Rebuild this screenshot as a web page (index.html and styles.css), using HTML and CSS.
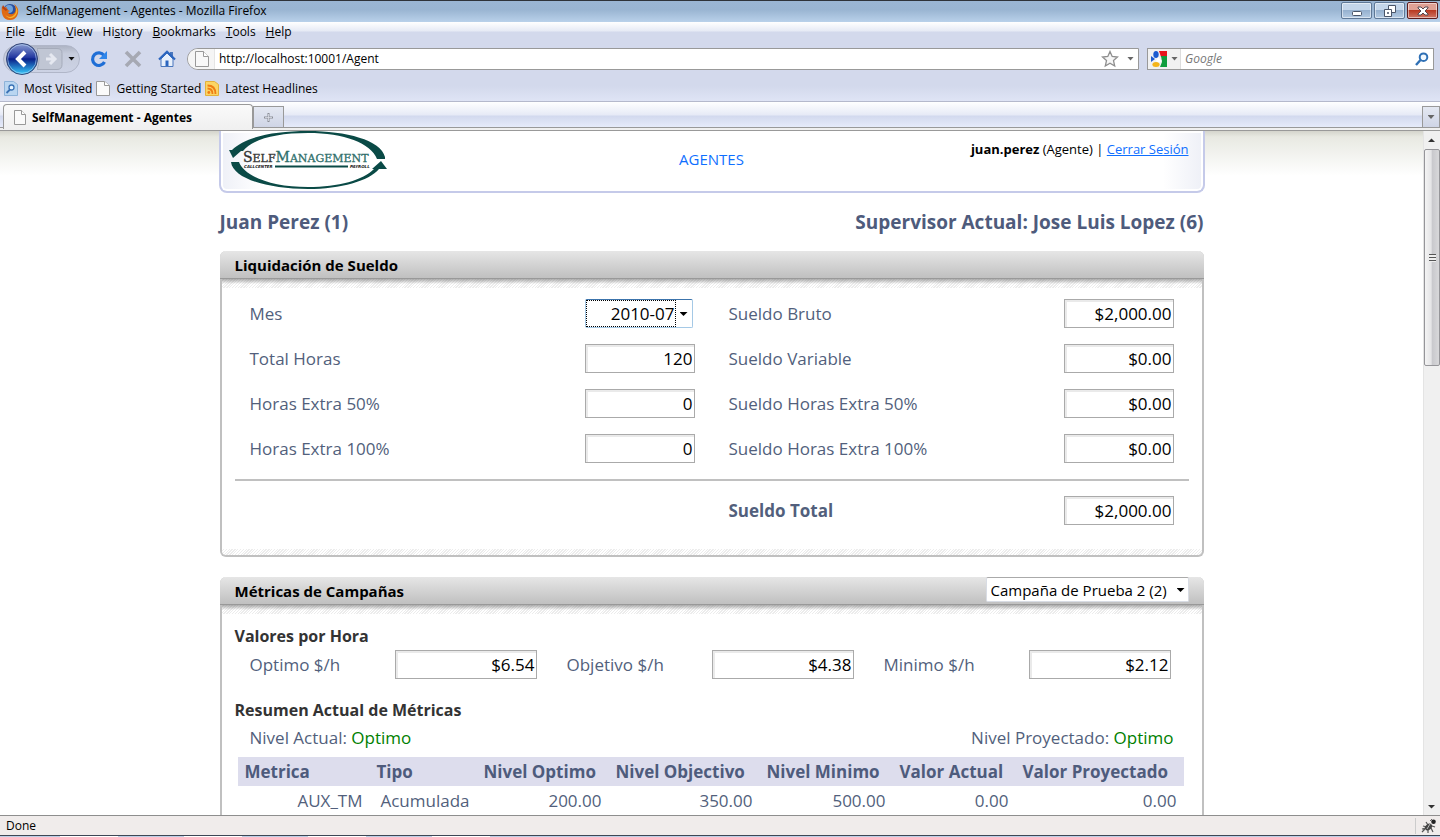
FILE: index.html
```html
<!DOCTYPE html>
<html lang="es">
<head>
<meta charset="utf-8">
<title>SelfManagement - Agentes</title>
<link rel="stylesheet" href="styles.css">
</head>
<body>
<div class="window">
  <header class="titlebar">
    <svg class="fox" width="18" height="18" viewBox="0 0 18 18" aria-hidden="true">
      <circle cx="9" cy="8" r="7" fill="#2b4f9e"/>
      <circle cx="8" cy="6" r="4" fill="#6fa3dc"/>
      <path d="M1 3C0 9 1 17 9 17C15 17 18 12 17 6C16 4 15 2 13 1C15 4 15 6 14 9C12 12 8 12 7 9L9 8L5 6L6 4C4 4 3 5 2 5Z" fill="#df6a12"/>
      <path d="M3 9C4 14 10 16 14 11C16 8 15 5 14 3C16 5 17 8 16 10C14 16 6 18 3 9Z" fill="#f7b52c"/>
      <path d="M1 5L2 2L4 5L7 6L5 8Z" fill="#b9400f"/>
    </svg>
    <span class="titlebar-text">SelfManagement - Agentes - Mozilla Firefox</span>
    <div class="win-buttons">
      <button class="win-btn" aria-label="Minimize"><svg width="12" height="12" viewBox="0 0 12 12"><rect x="1.500" y="6.500" width="9" height="4" rx="1" fill="#fff" stroke="#4a5568"/></svg></button>
      <button class="win-btn" aria-label="Restore"><svg width="12" height="12" viewBox="0 0 12 12"><path d="M4.500.5h7v7h-7z" fill="#fff" stroke="#4a5568"/><path d="M.5 4.500h7v7h-7z" fill="#fff" stroke="#4a5568"/><path d="M3.500 7.500h1v1h-1z" fill="#8fa6c2" stroke="#4a5568"/></svg></button>
      <button class="win-btn win-close" aria-label="Close"><svg width="12" height="12" viewBox="0 0 12 12"><path d="M1 2h3l2 2 2-2h3v1L8 6l3 3v1H8L6 8l-2 2H1V9l3-3-3-3z" fill="#fff" stroke="#55474e"/></svg></button>
    </div>
  </header>

  <div class="chrome">
    <nav class="menubar">
      <button><u>F</u>ile</button><button><u>E</u>dit</button><button><u>V</u>iew</button><button>Hi<u>s</u>tory</button><button><u>B</u>ookmarks</button><button><u>T</u>ools</button><button><u>H</u>elp</button>
    </nav>
    <div class="navbar">
      <div class="history-pill">
        <button class="icon-btn" aria-label="Back"><svg width="34" height="34" viewBox="0 0 34 34">
          <defs><linearGradient id="back" x1="0" y1="0" x2="0" y2="1"><stop offset="0" stop-color="#8d9ed2"/><stop offset=".45" stop-color="#2338a0"/><stop offset=".5" stop-color="#0a1f88"/><stop offset="1" stop-color="#38d0ff"/></linearGradient></defs>
          <circle cx="17" cy="17" r="15.500" fill="url(#back)" stroke="#344675"/><circle cx="17" cy="17" r="14.300" fill="none" stroke="#b7d6f4" stroke-opacity=".6"/>
          <path d="M20 10L13 17l7 7" fill="none" stroke="#fff" stroke-width="4"/></svg></button>
        <button class="icon-btn fwd" aria-label="Forward"><svg width="26" height="24" viewBox="0 0 26 24"><path d="M0 1.500h20q5 0 5 5v11q0 5-5 5H0q4-10 0-21z" fill="#c0c6d4" stroke="#a5abba"/><path d="M9 12h8M13 7l5 5-5 5" fill="none" stroke="#e5e8f0" stroke-width="3"/></svg></button>
        <button class="icon-btn arrow dark" aria-label="Recent pages"></button>
      </div>
      <button class="icon-btn reload" aria-label="Reload"><svg width="18" height="18" viewBox="0 0 18 18"><path d="M14 5.500A6.300 6.300 0 1 0 14.500 12" fill="none" stroke="#1f6fd6" stroke-width="3.200"/><path d="M17 1v8H9z" fill="#2f86ea"/></svg></button>
      <button class="icon-btn stop" aria-label="Stop"><svg width="18" height="18" viewBox="0 0 18 18"><path d="M2 2l14 14M16 2L2 16" stroke="#a6a9b3" stroke-width="3.600"/></svg></button>
      <button class="icon-btn" aria-label="Home"><svg width="18" height="18" viewBox="0 0 18 18"><path d="M3 9v7.500h12V9L9 3z" fill="#e8f0fb" stroke="#4a77bd"/><path d="M12 2h3v5h-3z" fill="#4a77bd"/><path d="M1 9.500L9 1.800l8 7.700" fill="none" stroke="#2c66bf" stroke-width="2.200"/><path d="M7.500 10.500h3V16h-3z" fill="#2c66bf"/></svg></button>
      <div class="urlbar">
        <span class="url-icon"><svg width="14" height="16" viewBox="0 0 14 16"><path d="M.5.500h8l5 5v10H.5z" fill="#f8f8f8" stroke="#999"/><path d="M8.500.5v5h5" fill="#fff" stroke="#999"/></svg></span>
        <input class="url-input" aria-label="Location" value="http://localhost:10001/Agent">
        <button class="icon-btn" aria-label="Bookmark this page"><svg width="18" height="18" viewBox="0 0 18 18"><path d="M9 1.500l2.200 5 5.300.5-4 3.600 1.200 5.400L9 13.200 4.300 16l1.200-5.400-4-3.600 5.300-.5z" fill="#f6f6f6" stroke="#8e8e8e" stroke-width="1.300"/></svg></button>
        <button class="icon-btn arrow" aria-label="Show history"></button>
      </div>
      <div class="search">
        <button class="engine" aria-label="Search engine"><svg width="16" height="16" viewBox="0 0 16 16"><path d="M8 0h8v6h-6z" fill="#e8141b"/><path d="M10 5h6v11H9l2-5z" fill="#0f9d3d"/><path d="M0 5l4 3-4 3z" fill="#1c5bd0"/><ellipse cx="5" cy="3.500" rx="2.700" ry="3.500" fill="#1c5bd0"/><path d="M7 6l4 4-4 2-2-2z" fill="#fff"/><ellipse cx="5" cy="13.500" rx="3.600" ry="2.500" fill="#f4b41a"/></svg><i class="arrow"></i></button>
        <input class="search-input" aria-label="Search" placeholder="Google">
        <button class="icon-btn" aria-label="Search"><svg width="14" height="14" viewBox="0 0 14 14"><circle cx="8.500" cy="5.200" r="3.800" fill="#f2f9ff" stroke="#2f70b5" stroke-width="2"/><path d="M5.500 8L1 13" stroke="#2f70b5" stroke-width="2.400"/></svg></button>
      </div>
    </div>
    <nav class="bookmarks">
      <a href="#"><svg width="14" height="15" viewBox="0 0 14 15"><path d="M.5.500h9l4 3v11H.5z" fill="#b9d5f1" stroke="#8db2d8"/><circle cx="7.500" cy="6.500" r="2.500" fill="#eaf5ff" stroke="#3b72b5" stroke-width="1.300"/><path d="M6 8.500L2.500 12" stroke="#3b72b5" stroke-width="1.800"/></svg>Most Visited</a>
      <a href="#"><svg width="14" height="15" viewBox="0 0 14 15"><path d="M.5.500h8l5 4v10H.5z" fill="#fafafa" stroke="#999"/><path d="M8.500.5v4h5" fill="#fff" stroke="#999"/></svg>Getting Started</a>
      <a href="#"><svg width="14" height="15" viewBox="0 0 14 15"><path d="M.5.500h9l4 3v11H.5z" fill="#fbd565" stroke="#e3b13c"/><circle cx="3.800" cy="11.500" r="1.400" fill="#ef7d14"/><path d="M2.500 7.500q5 0 5 5.500M2.500 4.500q8 0 8 8.500" fill="none" stroke="#ef7d14" stroke-width="1.800"/></svg>Latest Headlines</a>
    </nav>
  </div>

  <div class="tabstrip">
    <button class="tab"><svg width="12" height="15" viewBox="0 0 12 15"><path d="M.5.500h7l4 4v10H.5z" fill="#fafafa" stroke="#999"/><path d="M7.500.5v4h4" fill="#fff" stroke="#999"/></svg>SelfManagement - Agentes</button>
    <button class="tab-new" aria-label="New tab"><svg width="9" height="9" viewBox="0 0 9 9"><path d="M4.500 0v9M0 4.500h9" stroke="#8a8d96" stroke-width="2"/><path d="M4.500 1v7M1 4.500h7" stroke="#dde0e8" stroke-width=".8"/></svg></button>
    <button class="tab-list" aria-label="List all tabs"><i class="arrow"></i></button>
  </div>

  <div class="viewport">
    <main class="page">
      <div class="column">
        <div class="site-header">
          <svg class="logo" width="158" height="58" viewBox="0 0 158 58" role="img" aria-label="SelfManagement Callcenter Payroll">
            <path d="M3 19C16 6 44 0 79 0C117 0 152 9 156 26L156 28L148 28C142 12 115 2 79 2C47 2 24 8 14 20L12 20L4 27L0 19Z" fill="#0a4a46"/>
            <path d="M2 31C4 48 40 58 79 58C112 58 140 50 150 38L158 38L152 30L143 38L145 38C134 49 110 56 79 56C42 56 15 45 10 31Z" fill="#0a4a46"/>
            <text x="14" y="31" class="logo-name"><tspan class="logo-dark"><tspan class="logo-cap">S</tspan>ELF</tspan><tspan class="logo-teal"><tspan class="logo-cap">M</tspan>ANAGEMENT</tspan></text>
            <text x="15" y="37" class="logo-tag">CALLCENTER</text>
            <path d="M46 35.500h73" stroke="#0a4a46" stroke-width="2"/>
            <text x="121" y="37" class="logo-tag">PAYROLL</text>
          </svg>
          <a class="section-link" href="#">AGENTES</a>
          <p class="user"><b>juan.perez</b> (Agente) | <a href="#">Cerrar Sesión</a></p>
        </div>

        <div class="headline"><h1>Juan Perez (1)</h1><h1>Supervisor Actual: Jose Luis Lopez (6)</h1></div>

        <section class="panel">
          <div class="panel-head"><h2>Liquidación de Sueldo</h2></div>
          <div class="panel-body salary">
            <div class="pair">
              <div class="field"><label for="mes">Mes</label><span class="month"><select id="mes"><option>2010-07</option></select></span></div>
              <div class="field"><label for="bruto">Sueldo Bruto</label><input id="bruto" value="$2,000.00"></div>
              <div class="field"><label for="horas">Total Horas</label><input id="horas" value="120"></div>
              <div class="field"><label for="variable">Sueldo Variable</label><input id="variable" value="$0.00"></div>
              <div class="field"><label for="h50">Horas Extra 50%</label><input id="h50" value="0"></div>
              <div class="field"><label for="s50">Sueldo Horas Extra 50%</label><input id="s50" value="$0.00"></div>
              <div class="field"><label for="h100">Horas Extra 100%</label><input id="h100" value="0"></div>
              <div class="field"><label for="s100">Sueldo Horas Extra 100%</label><input id="s100" value="$0.00"></div>
            </div>
            <div class="pair total">
              <div class="field last"><label for="total"><b>Sueldo Total</b></label><input id="total" value="$2,000.00"></div>
            </div>
          </div>
        </section>

        <section class="panel">
          <div class="panel-head"><h2>Métricas de Campañas</h2><span class="campaign"><select aria-label="Campaña"><option>Campaña de Prueba 2 (2)</option></select></span></div>
          <div class="panel-body metrics">
            <h3>Valores por Hora</h3>
            <div class="rates">
              <div class="field"><label for="opt">Optimo $/h</label><input id="opt" value="$6.54"></div>
              <div class="field"><label for="obj">Objetivo $/h</label><input id="obj" value="$4.38"></div>
              <div class="field"><label for="min">Minimo $/h</label><input id="min" value="$2.12"></div>
            </div>
            <h3>Resumen Actual de Métricas</h3>
            <div class="levels"><p>Nivel Actual: <span>Optimo</span></p><p>Nivel Proyectado: <span>Optimo</span></p></div>
            <table>
              <colgroup><col class="c-metric"><col class="c-type"><col class="c-opt"><col class="c-obj"><col class="c-min"><col class="c-now"><col class="c-proj"></colgroup>
              <thead><tr><th>Metrica</th><th>Tipo</th><th>Nivel Optimo</th><th>Nivel Objectivo</th><th>Nivel Minimo</th><th>Valor Actual</th><th>Valor Proyectado</th></tr></thead>
              <tbody><tr><td>AUX_TM</td><td>Acumulada</td><td>200.00</td><td>350.00</td><td>500.00</td><td>0.00</td><td>0.00</td></tr></tbody>
            </table>
          </div>
        </section>
      </div>
    </main>
    <div class="scrollbar" aria-hidden="true">
      <svg width="16" height="18" viewBox="0 0 16 18"><path d="M4 11L7.500 7.500 11 11z" fill="#333"/></svg>
      <div class="thumb"><i></i></div>
      <svg class="down" width="16" height="18" viewBox="0 0 16 18"><path d="M4 8h7L7.500 11.500z" fill="#333"/></svg>
    </div>
  </div>

  <footer class="status">
    <span>Done</span>
    <span class="bug"><svg width="16" height="16" viewBox="0 0 16 16"><path d="M1 14l3-3M2 8l4 1M5 4l2 3M7 15l0-4M12 14l-2-4M14 9l-3-1M1 11l4-1" stroke="#555" stroke-width="1.200"/><ellipse cx="7.500" cy="9" rx="4" ry="2.800" transform="rotate(-40 7.500 9)" fill="#444"/><path d="M6 11l3-5" stroke="#bbb"/><circle cx="12.500" cy="3.800" r="2.300" fill="#222"/><path d="M9 3l2-2" stroke="#666"/></svg></span>
  </footer>
  <div class="taskbar"><i></i><i></i><i></i><i></i></div>
</div>
</body>
</html>
```

FILE: styles.css
```css
* { box-sizing: border-box; }
body { margin: 0; font-family: "Open Sans", "Noto Sans", sans-serif; font-size: 12px; color: #000; background: #fff; }
h1, h2, h3, p { margin: 0; }
button, input, select { font: inherit; color: inherit; margin: 0; }
button { border: 0; background: none; padding: 0; }
svg { display: block; flex: none; }

.window { height: 100vh; display: flex; flex-direction: column; overflow: hidden; }

/* Browser chrome */
.titlebar { flex: none; height: 22px; display: flex; align-items: center; border-top: 1px solid #2e3238; background: linear-gradient(#9ab5d3, #99b4d1 40%, #b9d1ea); padding-left: 1px; }
.titlebar-text { flex: 1; padding-left: 7px; line-height: 18px; padding-bottom: 2px; }
.win-buttons { display: flex; gap: 2px; padding: 0 2px 2px 0; }
.win-btn { width: 31px; height: 17px; display: flex; align-items: center; justify-content: center; border: 1px solid #5f7896; border-radius: 2px; background: linear-gradient(#c4d6ea 45%, #96b1cf 50%, #b4cbe3); box-shadow: inset 0 0 0 1px rgba(255,255,255,.5); }
.win-close { border-color: #5e1c1c; background: linear-gradient(#e0a195 45%, #b93a22 50%, #cf7766); }

.chrome { flex: none; background: linear-gradient(#fff, #e6eaf5 9px, #d3d9ec 10px, #d3d9ec 64px, #dfe4f5); border-bottom: 1px solid #b5b9cc; }
.menubar { height: 20px; display: flex; gap: 10px; align-items: center; padding-left: 6px; line-height: 18px; }
.navbar { height: 33px; display: flex; align-items: center; padding: 0 6px 0 3px; }
.icon-btn { display: flex; align-items: center; justify-content: center; flex: none; }
.history-pill { display: flex; align-items: center; width: 77px; height: 28px; border-radius: 14px; background: linear-gradient(#aeb4c4, #c6ccdc 30%, #ccd2e4); border: 1px solid #b0b6c8; padding-left: 1px; }
.fwd { margin-left: -2px; }
.arrow { width: 7px; height: 4px; background: #666; clip-path: polygon(0 0, 100% 0, 50% 100%); display: block; flex: none; }
.dark { background: #111; margin-left: 5px; }
.reload { margin: 0 16px 0 10px; }
.stop { margin-right: 16px; }
.urlbar { flex: 1; display: flex; align-items: center; height: 22px; margin: 0 8px 0 11px; border: 1px solid #999; border-radius: 11px 0 0 11px; background: #fff; padding-right: 4px; gap: 8px; }
.url-icon { width: 27px; height: 20px; padding: 2px 0 0 7px; background: #f5f5f5; border-radius: 10px 0 0 10px; border-right: 1px solid #e5e5e5; }
.url-input, .search-input { flex: 1; min-width: 0; border: 0; outline: 0; padding: 0; background: transparent; }
.url-input { margin-left: -4px; }
.search { width: 287px; height: 22px; display: flex; align-items: center; border: 1px solid #999; background: #fff; padding-right: 4px; }
.engine { display: flex; align-items: center; gap: 4px; width: 33px; height: 20px; padding-left: 3px; background: #f1f1f1; border-right: 1px solid #ddd; }
.search-input { padding-left: 4px; font-style: italic; }
.search-input::placeholder { color: #777; opacity: 1; }
.bookmarks { height: 26px; display: flex; align-items: center; gap: 4px; padding-left: 4px; }
.bookmarks a { display: flex; align-items: center; gap: 6px; color: #000; text-decoration: none; }

.tabstrip { flex: none; height: 29px; display: flex; align-items: flex-end; padding-left: 3px; border-bottom: 1px solid #999; background: linear-gradient(#fff, #e6eaf6 13px, #d2d9ee 14px, #e6ebfa 25px, #999 25px, #999 26px, #f0f0f0 26px); }
.tab { width: 250px; height: 25px; margin-bottom: 1px; display: flex; align-items: center; gap: 6px; padding-left: 10px; border: 1px solid #999; border-bottom: 0; border-radius: 4px 4px 0 0; background: linear-gradient(#fafafa, #f0f0f0); font-weight: bold; }
.tab-new, .tab-list { display: flex; align-items: center; justify-content: center; height: 22px; margin-bottom: 2px; border: 1px solid #999; background: linear-gradient(#e4e8f2, #cfd5e6); }
.tab-new { width: 31px; }
.tab-list { width: 18px; margin-left: auto; }

/* Scrolling area */
.viewport { flex: 1; min-height: 0; display: flex; }
.page { flex: 1; overflow: hidden; background: linear-gradient(#d4d4cc, #e8e9e2 6px, #fff 45px); }
.scrollbar { width: 17px; display: flex; flex-direction: column; background: #f0f0f0; border-left: 1px solid #e4e4e4; }
.thumb { height: 217px; display: flex; align-items: center; justify-content: center; border: 1px solid #959599; border-radius: 2px; background: linear-gradient(90deg, #f4f4f4, #e4e4e6 45%, #c8c8cc 50%, #d8d8da); }
.thumb i { width: 7px; height: 8px; background: repeating-linear-gradient(#555 0 1px, #eee 1px 3px); }
.down { margin-top: auto; }

/* Site header */
.column { max-width: 984px; margin: 0 auto; }
.site-header { display: grid; grid-template-columns: 1fr auto 1fr; align-items: start; height: 62px; margin: 0 -1px; padding: 0 8px; border: 2px solid #c5cae9; border-top: 0; border-radius: 0 0 8px 8px; background: linear-gradient(90deg, #eef0f7, #fff 40px, #fff calc(100% - 40px), #eef0f7); box-shadow: inset 0 0 0 2px #fff; }
.logo-name { font: 11px "DejaVu Serif", serif; stroke-width: .3; }
.logo-cap { font-size: 14px; }
.logo-dark { fill: #333; stroke: #333; }
.logo-teal { fill: #2f6f6b; stroke: #2f6f6b; }
.logo-tag { font: italic bold 4px "DejaVu Sans", sans-serif; fill: #222; }
.section-link { color: #0f6fff; text-decoration: none; font-size: 15px; line-height: 20px; padding-top: 18px; }
.user { text-align: right; font-size: 13px; line-height: 18px; padding: 9px 6px 0 0; }
.user a { color: #0f6fff; }
.headline { display: flex; justify-content: space-between; padding: 16px 0 15px; color: #4e5b7c; }
h1 { font-size: 19px; line-height: 27px; font-weight: bold; }

/* Panels */
.panel { border: 2px solid #c0c0c0; border-top: 0; border-radius: 6px; margin-bottom: 20px; background: repeating-linear-gradient(135deg, #fff 0 1px, #ececec 1px 2px) bottom / 100% 6px no-repeat; }
.panel-head { position: relative; display: flex; justify-content: space-between; height: 28px; margin: 0 -2px; padding: 0 15px; border-bottom: 1px solid #999; border-radius: 6px 6px 0 0; background: linear-gradient(#e6e6e6, #c0c0c0); }
h2 { font-size: 15px; line-height: 28px; font-weight: bold; }
.panel-body { padding: 0 13px; color: #525f7c; font-size: 17px; line-height: 30px; background: linear-gradient(rgba(120,120,120,.6), rgba(255,255,255,0) 5px) top / 100% 5px no-repeat, repeating-linear-gradient(135deg, #fff 0 1px, #ececec 1px 2px) top / 100% 9px no-repeat; }
.pair { display: grid; grid-template-columns: 1fr 1fr; column-gap: 4px; row-gap: 16px; }
.salary { padding-top: 20px; padding-bottom: 30px; }
.total { margin-top: 16px; padding-top: 15px; border-top: 2px solid #c0c0c0; }
.last { grid-column: 2; }
.field { display: flex; justify-content: space-between; height: 29px; padding: 0 15px; }
.field input { width: 110px; height: 29px; padding: 1px 1px 0; border: 1px solid #aaa; border-radius: 0; text-align: right; color: #000; background: #fff; box-shadow: inset 2px 2px 0 #eaeaea; }
.month { position: relative; width: 108px; margin-right: 2px; border: 1px solid #a5c9e6; border-top-color: #3c74ac; border-radius: 2px; color: #000; }
.month select { display: block; width: 90px; height: 27px; line-height: 24px; border: 1px dotted #000; border-radius: 0; }
select { appearance: none; background: #fff; padding: 0; outline: 0; }
.month select { text-align: right; text-align-last: right; }
.month::after, .campaign::after { content: ""; position: absolute; right: 4px; top: 12px; width: 8px; height: 4px; background: #000; clip-path: polygon(0 0, 100% 0, 50% 100%); }
.campaign { position: relative; height: 26px; color: #000; font-size: 15px; line-height: 22px; }
.campaign::after { top: 11px; }
.campaign select { display: block; width: 203px; height: 25px; padding-left: 4px; border: 1px solid #d8dce4; border-top-color: #aaa; border-radius: 2px; }

.metrics { padding-top: 18px; padding-bottom: 30px; }
h3 { font-size: 16px; line-height: 26px; font-weight: bold; color: #333; }
.rates { display: grid; grid-template-columns: repeat(3, 1fr); padding-right: 3px; margin: 1px 0 18px; }
.rates input { width: 142px; }
.levels { display: flex; justify-content: space-between; line-height: 29px; padding: 0 15px; }
.levels span { color: #008000; }
table { width: calc(100% - 8px); margin: 5px 5px 0 3px; table-layout: fixed; border-collapse: collapse; line-height: 29px; }
th { padding: 0 7px; text-align: left; background: #dddded; white-space: nowrap; color: #4e5b7c; }
td { padding: 0 7px; text-align: right; }
.c-metric { width: 132px; } .c-type { width: 107px; } .c-opt { width: 132px; } .c-obj { width: 151px; }
.c-min { width: 133px; } .c-now { width: 123px; } .c-proj { width: 168px; }

/* Status bar */
.status { flex: none; height: 20px; display: flex; justify-content: space-between; align-items: center; border-top: 1px solid #8e8e8e; background: #f0eceb; padding-left: 6px; }
.bug { width: 25px; padding-left: 5px; border-left: 1px solid #ccc; }
.taskbar { flex: none; height: 2px; display: flex; gap: 66px; padding-left: 60px; background: #bccfe6; border-top: 1px solid #3e4654; }
.taskbar i { width: 58px; background: #fff; }
```
